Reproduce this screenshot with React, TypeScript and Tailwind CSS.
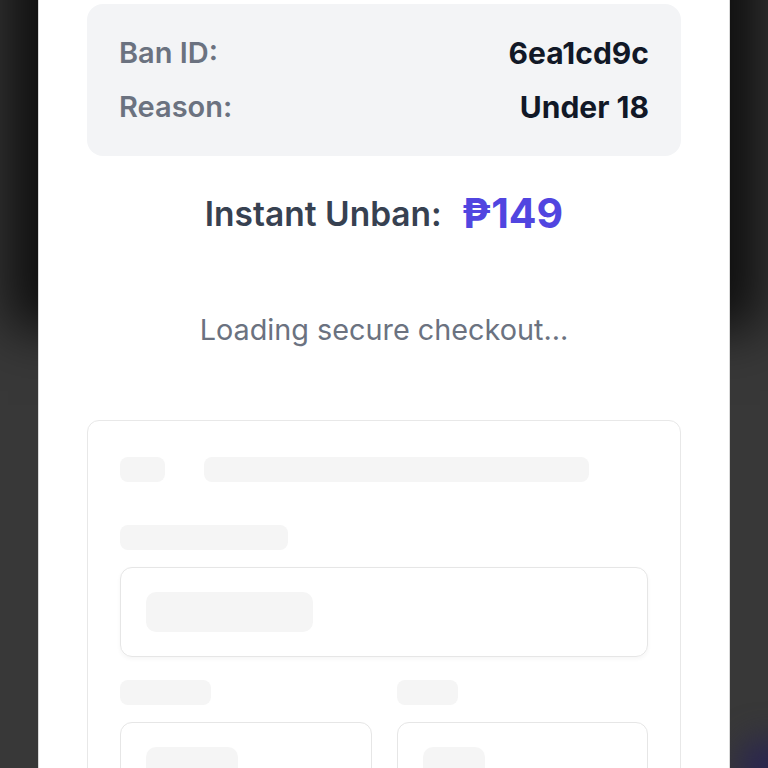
export default function App() {
  return (
    <div
      className="relative h-[768px] w-[768px] overflow-hidden bg-[#383838]"
      style={{ fontFamily: 'Inter, "Noto Sans", sans-serif' }}
    >
      {/* shadow from the sheet behind */}
      <div className="absolute left-[38px] right-[38px] top-[-120px] h-[420px] shadow-[0_0_50px_30px_rgba(0,0,0,0.75)]" />
      <div className="absolute bottom-[-30px] right-[-30px] h-[60px] w-[60px] rounded-full bg-[#2a2550] blur-lg" />

      <div className="relative mx-[38px] h-[768px] border-l border-r border-[#d9d9d9] bg-white px-12 pt-[4px]">
        <div className="flex flex-col gap-[14px] rounded-2xl bg-[#f3f4f6] px-8 py-[29px]">
          <div className="flex h-10 items-center justify-between">
            <span className="text-[29px] font-semibold text-[#6b7280]">Ban ID:</span>
            <span className="text-[30px] font-bold text-[#111827]">6ea1cd9c</span>
          </div>
          <div className="flex h-10 items-center justify-between">
            <span className="text-[29px] font-semibold text-[#6b7280]">Reason:</span>
            <span className="text-[30px] font-bold text-[#111827]">Under 18</span>
          </div>
        </div>

        <div className="mt-[34px] flex h-12 items-center justify-center gap-5">
          <span className="text-[33.5px] font-semibold text-[#374151]">Instant Unban:</span>
          <span className="text-[41px] font-bold text-[#5145e0]">₱149</span>
        </div>

        <div className="mt-[72px] flex h-10 items-center justify-center text-[28.8px] text-[#6b7280]">
          Loading secure checkout...
        </div>

        <div className="mt-[70px] rounded-xl border border-[#e8e8e8] px-8 pt-9 pb-8">
          <div className="flex h-[25px] gap-[39px]">
            <div className="w-[45px] rounded-lg bg-[#f5f5f5]" />
            <div className="w-[385px] rounded-lg bg-[#f5f5f5]" />
          </div>

          <div className="mt-[43px] h-[25px] w-[168px] rounded-lg bg-[#f5f5f5]" />
          <div className="mt-[17px] h-[90px] rounded-xl border border-[#e6e6e6] px-[25px] pt-[24px] shadow-[0_2px_4px_rgba(0,0,0,0.04)]">
            <div className="h-10 w-[167px] rounded-[10px] bg-[#f5f5f5]" />
          </div>

          <div className="mt-[23px] grid grid-cols-2 gap-[25px]">
            <div>
              <div className="h-[25px] w-[91px] rounded-lg bg-[#f5f5f5]" />
              <div className="mt-[17px] h-[90px] rounded-xl border border-[#e6e6e6] px-[25px] pt-[24px]">
                <div className="h-10 w-[92px] rounded-[10px] bg-[#f5f5f5]" />
              </div>
            </div>
            <div>
              <div className="h-[25px] w-[61px] rounded-lg bg-[#f5f5f5]" />
              <div className="mt-[17px] h-[90px] rounded-xl border border-[#e6e6e6] px-[25px] pt-[24px]">
                <div className="h-10 w-[62px] rounded-[10px] bg-[#f5f5f5]" />
              </div>
            </div>
          </div>
        </div>
      </div>
    </div>
  );
}
